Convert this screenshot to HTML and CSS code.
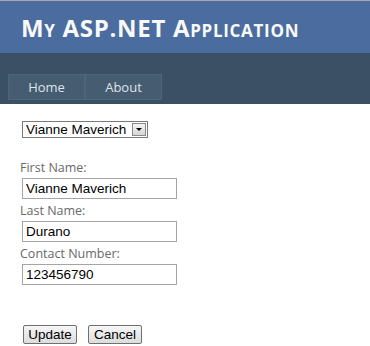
FILE: index.html
```html
<!DOCTYPE html>
<html lang="en">
  <head>
    <meta charset="UTF-8" />
    <title>My ASP.NET Application</title>
    <link rel="stylesheet" href="styles.css">
  </head>
  <body>
    <div class="header">
      <h1>My ASP.NET Application</h1>
    </div>
    <div class="menu-bar">
      <ul class="menu">
        <li><a href="#">Home</a></li>
        <li><a href="#">About</a></li>
      </ul>
    </div>
    <div class="main">
      <div class="picker">
        <select>
          <option>Vianne Maverich</option>
        </select>
        <span class="arrow"></span>
      </div>

      <div class="fields">
        <label>First Name:</label>
        <input type="text" value="Vianne Maverich" />
        <label>Last Name:</label>
        <input type="text" value="Durano" />
        <label>Contact Number:</label>
        <input type="text" value="123456790" />
      </div>

      <div class="actions">
        <button>Update</button>
        <button>Cancel</button>
      </div>
    </div>
  </body>
</html>
```

FILE: styles.css
```css
body {
  margin: 0;
  font-family: "Open Sans", "Noto Sans", sans-serif;
  font-size: 12.8px;
  color: #696969;
  background: #fff;
}
.header {
  background-color: #4b6c9e;
  border-top: 1px solid #a9a9a9;
  height: 52px;
}
.header h1 {
  margin: 0;
  padding: 12px 0 0 21px;
  color: #f9f9f9;
  font-size: 24px;
  font-weight: 700;
  font-variant: small-caps;
  line-height: 30px;
  letter-spacing: 0.7px;
}
.menu-bar {
  background-color: #3b5064;
  height: 51px;
  box-sizing: border-box;
  padding: 21px 0 0 8px;
}
.menu {
  list-style: none;
  margin: 0;
  padding: 0;
  display: flex;
}
.menu a {
  display: block;
  width: 75px;
  height: 24px;
  line-height: 24px;
  text-align: center;
  background-color: #465c71;
  border: 1px solid #4e667d;
  color: #dde4ec;
  text-decoration: none;
  font-size: 13px;
}
.main {
  padding: 16px 0 0 20px;
}
.picker {
  margin-left: 2px;
  display: inline-flex;
  align-items: center;
  width: 126px;
  height: 17px;
  border: 1px solid #7a7a7a;
  box-sizing: border-box;
  background: #fff;
}
.picker select {
  appearance: none;
  -webkit-appearance: none;
  flex: 1;
  min-width: 0;
  border: none;
  outline: none;
  background: transparent;
  padding: 0 0 0 3px;
  height: 15px;
  font-family: "Liberation Sans", Arial, sans-serif;
  font-size: 13.5px;
  color: #000;
}
.arrow {
  display: flex;
  align-items: center;
  justify-content: center;
  width: 12px;
  height: 11px;
  margin-right: 1px;
  border: 1px solid #8a8a8a;
  background: linear-gradient(#f4f4f4, #d6d6d6);
}
.arrow::after {
  content: "";
  border-left: 3px solid transparent;
  border-right: 3px solid transparent;
  border-top: 3px solid #000;
}
.fields {
  display: flex;
  flex-direction: column;
  align-items: flex-start;
  margin-top: 21px;
}
.fields label {
  line-height: 18px;
  height: 19px;
  font-size: 12.5px;
}
.fields input {
  margin: 0 0 3px 2px;
  width: 155px;
  height: 21px;
  box-sizing: border-box;
  border: 1px solid #a5a5a5;
  padding: 0 3px;
  font-family: "Liberation Sans", Arial, sans-serif;
  font-size: 13.5px;
  color: #000;
}
.actions {
  display: flex;
  gap: 11px;
  margin: 37px 0 0 3px;
}
.actions button {
  width: 54px;
  height: 19px;
  padding: 0;
  font-family: "Liberation Sans", Arial, sans-serif;
  font-size: 13.5px;
  color: #000;
  background: linear-gradient(#f6f6f6, #dddddd);
  border: 1px solid #707070;
  border-radius: 2px;
}
```
